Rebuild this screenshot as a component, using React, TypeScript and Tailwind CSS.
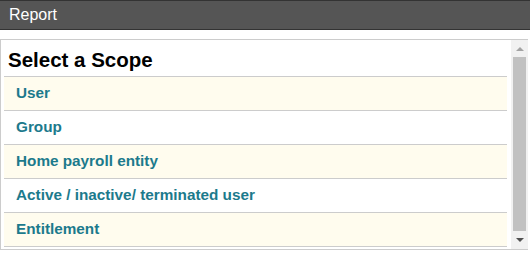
const scopes = [
  "User",
  "Group",
  "Home payroll entity",
  "Active / inactive/ terminated user",
  "Entitlement",
];

export default function App() {
  return (
    <div className="w-[530px] h-[253px] bg-white font-['Liberation_Sans',Arial,sans-serif] overflow-hidden">
      <div className="h-[30px] bg-[#555555] border-y border-[#333333] flex items-center px-[9px]">
        <span className="text-white text-[16px] leading-none">Report</span>
      </div>
      <div className="mt-[9px] mr-[2px] h-[211px] border border-[#cccccc] border-r-0 flex">
        <div className="flex-1 pl-[3px] pr-[4px] overflow-hidden">
          <h2 className="h-[37px] px-[4px] pt-[10px] text-[20.5px] font-bold text-black leading-none border-b border-[#cccccc]">
            Select a Scope
          </h2>
          {scopes.map((s, i) => (
            <div
              key={s}
              className={`h-[34px] flex items-center px-[12px] border-b border-[#cccccc] text-[15.3px] font-bold text-[#1c7a8c] ${
                i % 2 === 0 ? "bg-[#fffcee]" : "bg-white"
              }`}
            >
              {s}
            </div>
          ))}
        </div>
        <div className="w-[17px] bg-[#f1f1f1] flex flex-col items-center">
          <div className="h-[17px] flex items-center justify-center">
            <div className="w-0 h-0 border-x-[4px] border-x-transparent border-b-[4px] border-b-[#a3a3a3]" />
          </div>
          <div className="w-[13px] h-[174px] bg-[#c1c1c1]" />
          <div className="flex-1 flex items-center justify-center">
            <div className="w-0 h-0 border-x-[4px] border-x-transparent border-t-[4px] border-t-[#505050]" />
          </div>
        </div>
      </div>
    </div>
  );
}
